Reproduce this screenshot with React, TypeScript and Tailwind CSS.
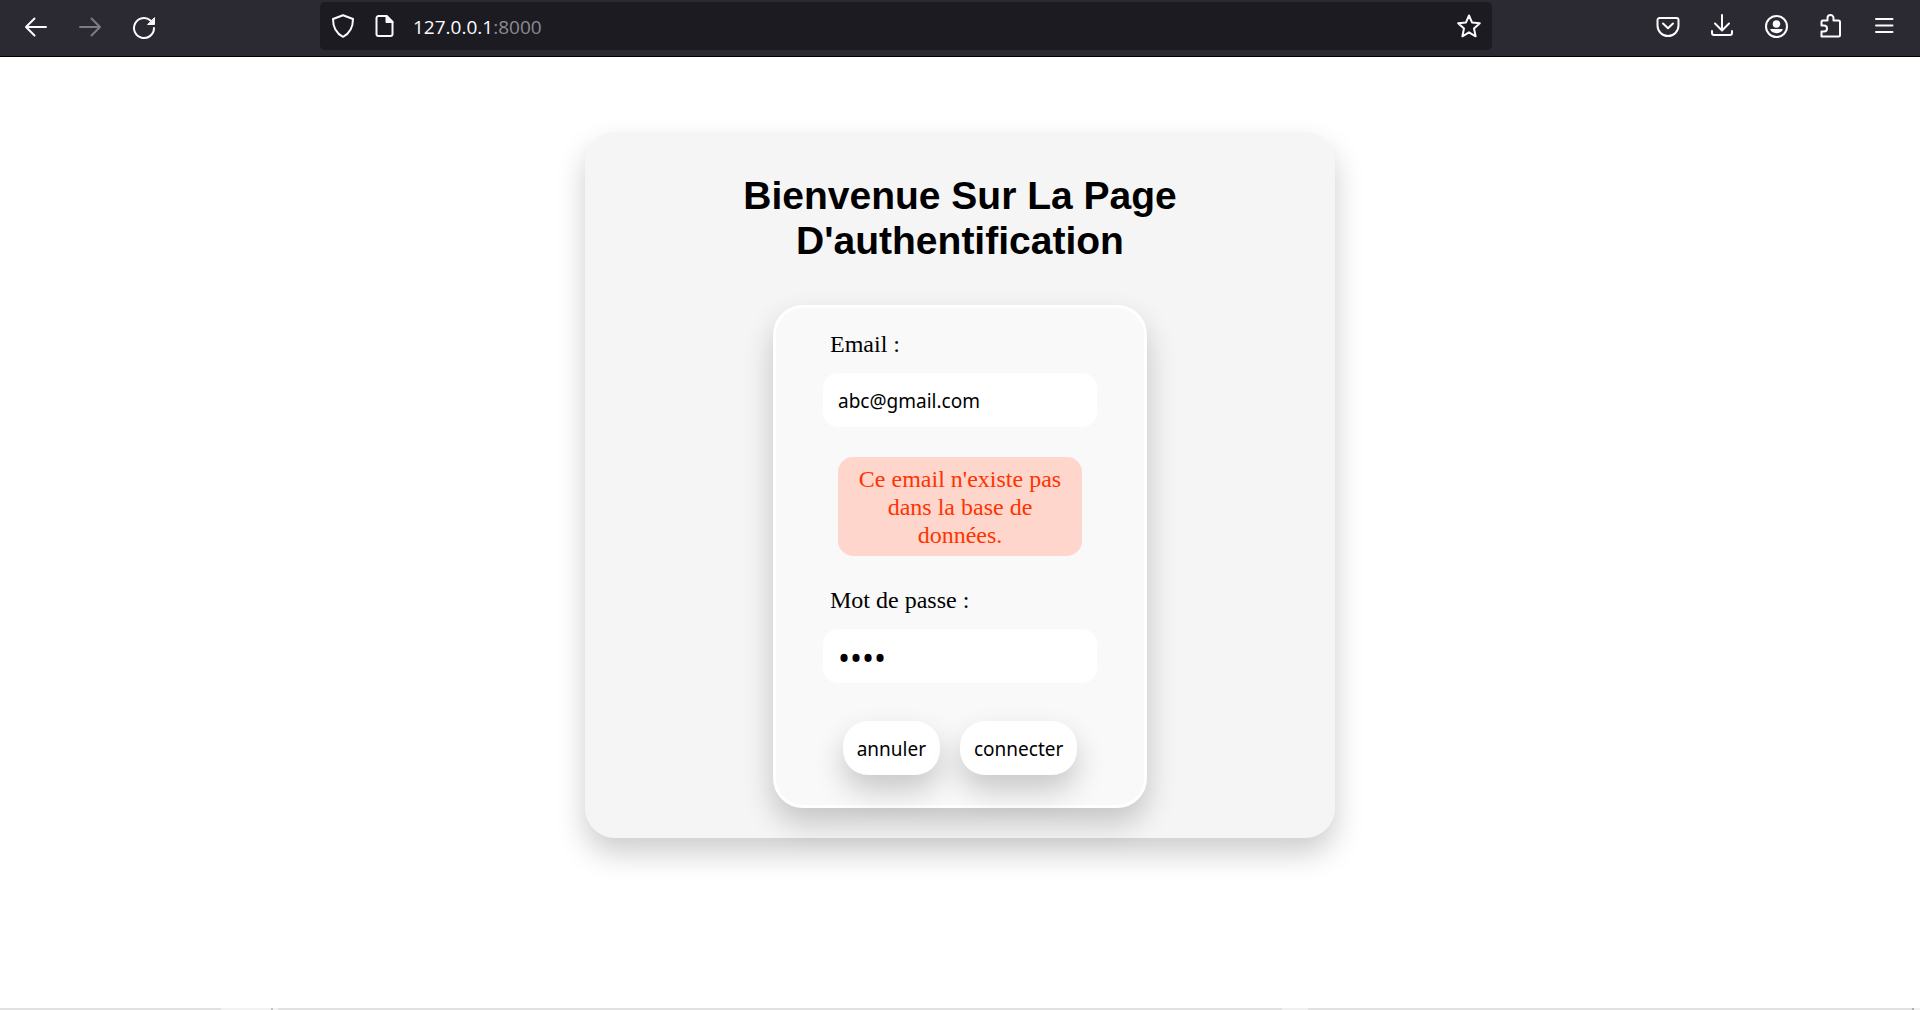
import React from "react";

const stroke = {
  fill: "none",
  stroke: "currentColor",
  strokeWidth: 2,
  strokeLinecap: "round" as const,
  strokeLinejoin: "round" as const,
};

function Icon({ children }: { children: React.ReactNode }) {
  return (
    <svg viewBox="0 0 24 24" className="block size-6" aria-hidden="true" {...stroke}>
      {children}
    </svg>
  );
}

function ToolButton({
  label,
  dim = false,
  children,
}: {
  label: string;
  dim?: boolean;
  children: React.ReactNode;
}) {
  return (
    <button
      type="button"
      aria-label={label}
      disabled={dim}
      className={dim ? "text-[#7d7b84]" : "text-[#fbfbfe]"}
    >
      <Icon>{children}</Icon>
    </button>
  );
}

function BrowserBar() {
  return (
    <header className="flex h-[57px] items-start border-b border-black bg-[#2b2a33]">
      <nav className="flex w-80 shrink-0 gap-[30px] pt-[15px] pl-6">
        <ToolButton label="Page précédente">
          <path d="M2 12H22M10.500 3.500L2 12L10.500 20.500" />
        </ToolButton>
        <ToolButton label="Page suivante" dim>
          <path d="M2 12H22M13.500 3.500L22 12L13.500 20.500" />
        </ToolButton>
        <ToolButton label="Actualiser">
          <path d="M22 13A10 10 0 1 1 18.500 5.400" />
          <path d="M22.500 3V9.500H16Z" fill="currentColor" strokeWidth="1" />
        </ToolButton>
      </nav>
      <div className="mt-0.5 flex h-12 flex-1 items-center gap-[17px] rounded-[5px] bg-[#1c1b22] px-[11px]">
        <ToolButton label="Protection">
          <path d="M12 1.200L22 5C22 13 19.500 19 12 22.800C4.500 19 2 13 2 5Z" />
        </ToolButton>
        <ToolButton label="Informations du site">
          <path d="M14.500 2H6.500A2 2 0 0 0 4.500 4V20A2 2 0 0 0 6.500 22H18.500A2 2 0 0 0 20.500 20V8Z" />
          <path d="M14.500 2V8H20.500Z" fill="currentColor" />
        </ToolButton>
        <p className="flex-1 pt-0.5 font-['Open_Sans',sans-serif] text-[19px] leading-7 text-[#fbfbfe]">
          127.0.0.1<span className="text-[#8b8a92]">:8000</span>
        </p>
        <ToolButton label="Marquer cette page">
          <path d="M12 1.500L15 8.400L22.800 9.200L17 14.400L18.600 22.300L12 18.300L5.400 22.300L7 14.400L1.200 9.200L9 8.400Z" />
        </ToolButton>
      </div>
      <nav className="flex w-[428px] shrink-0 justify-end gap-[30px] pt-3.5 pr-6">
        <ToolButton label="Pocket">
          <path d="M3.500 4H20.500A2 2 0 0 1 22.500 6V11.500A10.500 10.500 0 0 1 1.500 11.500V6A2 2 0 0 1 3.500 4Z" />
          <path d="M7 9.500L12 14.300L17 9.500" />
        </ToolButton>
        <ToolButton label="Téléchargements">
          <path d="M12 1V16M5 9.500L12 16.500L19 9.500M2 17V19A2 2 0 0 0 4 21H20A2 2 0 0 0 22 19V17" />
        </ToolButton>
        <ToolButton label="Compte">
          <circle cx="12.500" cy="12.500" r="10.500" />
          <circle cx="12.500" cy="10" r="3.800" fill="currentColor" stroke="none" />
          <path d="M6.200 15H18.800C17.800 20.500 7.200 20.500 6.200 15Z" fill="currentColor" stroke="none" />
        </ToolButton>
        <ToolButton label="Extensions">
          <path d="M3.500 22.500V17.500H6A3 3 0 0 0 6 11.500H3.500V8A1.500 1.500 0 0 1 5 6.500H9.500V4A3 3 0 0 1 15.500 4V6.500H20.500A1.500 1.500 0 0 1 22 8V21A1.500 1.500 0 0 1 20.500 22.500Z" />
        </ToolButton>
        <ToolButton label="Menu">
          <path d="M4 5H20.500M4 11.500H20.500M4 18H20.500" />
        </ToolButton>
      </nav>
    </header>
  );
}

function ErrorMessage({ children }: { children: React.ReactNode }) {
  return (
    <p
      role="alert"
      className="mx-[15px] mt-[30px] rounded-[15px] bg-[#ffd6cc] px-4 pt-2 pb-[7px] text-center text-2xl leading-7 text-[#ff3300]"
    >
      {children}
    </p>
  );
}

function Field({
  id,
  label,
  type,
  value,
}: {
  id: string;
  label: string;
  type: "email" | "password";
  value: string;
}) {
  return (
    <>
      <label htmlFor={id} className="block pl-[7px] text-2xl leading-7">
        {label}
      </label>
      <input
        id={id}
        type={type}
        defaultValue={value}
        className={
          "mt-[15px] block h-[54px] w-full rounded-[15px] bg-white px-[15px] pt-0.5 font-['Noto_Sans',sans-serif] outline-none " +
          (type === "password" ? "text-[32px]" : "text-[19px]")
        }
      />
    </>
  );
}

function PillButton({ type, children }: { type: "reset" | "submit"; children: React.ReactNode }) {
  return (
    <button
      type={type}
      className="h-[54px] rounded-[25px] bg-white px-3.5 pt-0.5 font-['Noto_Sans',sans-serif] text-[19px] shadow-[0_15px_30px_rgba(0,0,0,0.2)]"
    >
      {children}
    </button>
  );
}

export default function App() {
  return (
    <div className="flex min-h-screen flex-col bg-white text-black">
      <BrowserBar />
      <main className="flex-1 px-4 pt-[75px]">
        <section className="mx-auto max-w-[750px] rounded-[30px] bg-[#f5f5f5] px-4 pt-[41px] pb-[30px] shadow-[0_15px_30px_rgba(0,0,0,0.2)]">
          <h1 className="mx-auto max-w-[500px] text-center font-['Liberation_Sans',Arial,sans-serif] text-[39px] leading-[45px] font-bold">
            Bienvenue Sur La Page D'authentification
          </h1>
          <form
            onSubmit={(e) => e.preventDefault()}
            className="mx-auto mt-[42px] max-w-[374px] rounded-[30px] border-[3px] border-white bg-[#f9f9f9] px-[47px] pt-[22px] pb-[30px] font-['Liberation_Serif','Times_New_Roman',serif] shadow-[0_15px_30px_rgba(0,0,0,0.2)]"
          >
            <Field id="email" label="Email :" type="email" value="abc@gmail.com" />
            <ErrorMessage>Ce email n'existe pas dans la base de données.</ErrorMessage>
            <div className="mt-[30px]">
              <Field id="password" label="Mot de passe :" type="password" value="1234" />
            </div>
            <div className="mt-[38px] flex justify-center gap-5">
              <PillButton type="reset">annuler</PillButton>
              <PillButton type="submit">connecter</PillButton>
            </div>
          </form>
        </section>
      </main>
      <footer className="flex h-0.5">
        <div className="w-[221px] bg-[#e1e1e1]" />
        <div className="w-[50px] bg-[#f2f2f2]" />
        <div className="w-0.5 bg-[#c4c4c4]" />
        <div className="w-[5px] bg-[#f2f2f2]" />
        <div className="flex-1 bg-[#e1e1e1]" />
        <div className="w-[26px] bg-[#f0f0f0]" />
        <div className="w-[604px] bg-[#e1e1e1]" />
        <div className="w-0.5 bg-[#b0b0b0]" />
        <div className="w-1.5 bg-[#f0f0f0]" />
      </footer>
    </div>
  );
}
